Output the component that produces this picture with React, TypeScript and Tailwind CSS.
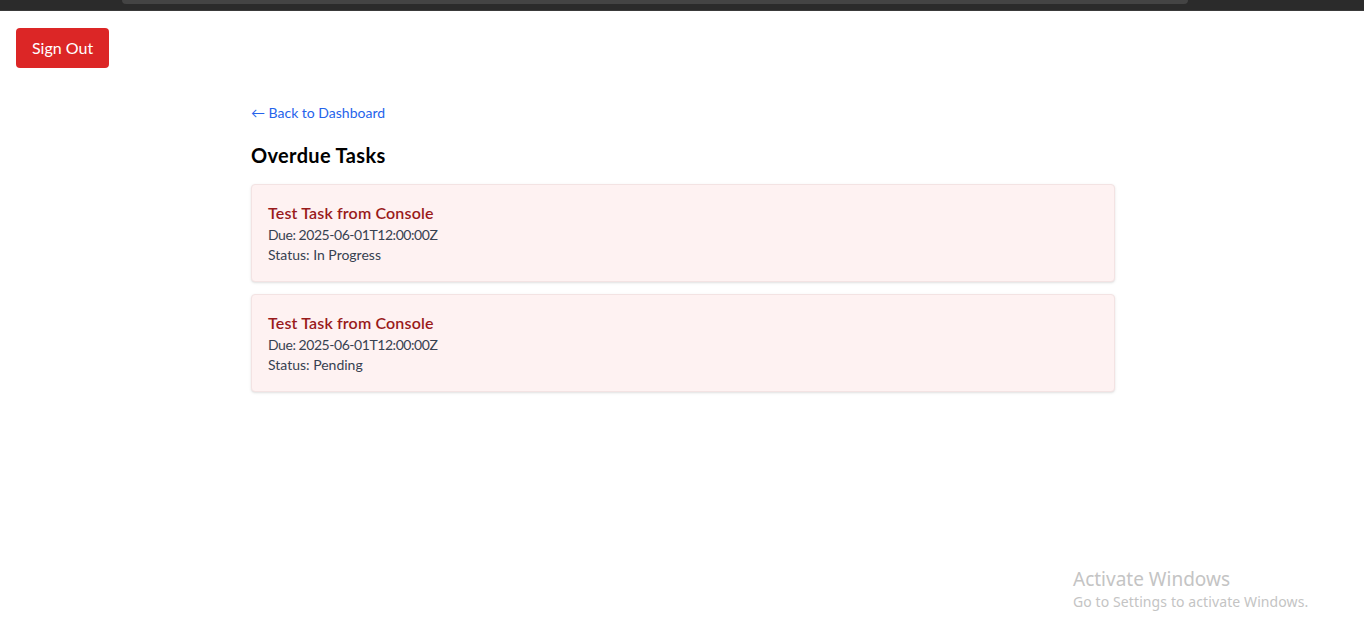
const tasks = [
  { title: 'Test Task from Console', due: '2025-06-01T12:00:00Z', status: 'In Progress' },
  { title: 'Test Task from Console', due: '2025-06-01T12:00:00Z', status: 'Pending' },
]

export default function App() {
  return (
    <div className="relative min-h-[641px] bg-white font-['Lato',sans-serif]">
      {/* browser chrome strip */}
      <div className="h-[11px] bg-[#2b2b2b] border-b border-[#3a3a3a]">
        <div className="ml-[122px] w-[1066px] h-[4px] bg-[#444444] rounded-b-[8px]" />
      </div>

      <div className="pl-4 pt-[17px]">
        <button className="h-10 px-4 bg-[#dc2626] text-white text-base rounded">Sign Out</button>
      </div>

      <div className="pl-[2px]">
        <div className="max-w-4xl mx-auto mt-[19px] p-4">
          <a href="#" className="block text-sm leading-5 text-[#2563eb] mb-[18px]">
            ← Back to Dashboard
          </a>
          <h1 className="text-xl leading-7 font-bold text-black mb-[15px] tracking-[0.35px]">Overdue Tasks</h1>
          <div className="space-y-3">
            {tasks.map((t, i) => (
              <div key={i} className="p-4 bg-[#fef2f2] border border-[#f3e3e3] rounded shadow-sm">
                <h2 className="text-base leading-6 font-semibold text-[#991b1b] tracking-[0.15px]">{t.title}</h2>
                <p className="text-sm leading-5 text-[#374151] tracking-[-0.45px]">Due: {t.due}</p>
                <p className="text-sm leading-5 text-[#374151]">Status: {t.status}</p>
              </div>
            ))}
          </div>
        </div>
      </div>

      {/* windows watermark */}
      <div className="absolute left-[1073px] top-[566px] text-[#c4c4c4] pointer-events-none font-['Noto_Sans',sans-serif]">
        <div className="text-[19px] leading-[26px]">Activate Windows</div>
        <div className="text-sm leading-5 tracking-[0.1px]">Go to Settings to activate Windows.</div>
      </div>
    </div>
  )
}
